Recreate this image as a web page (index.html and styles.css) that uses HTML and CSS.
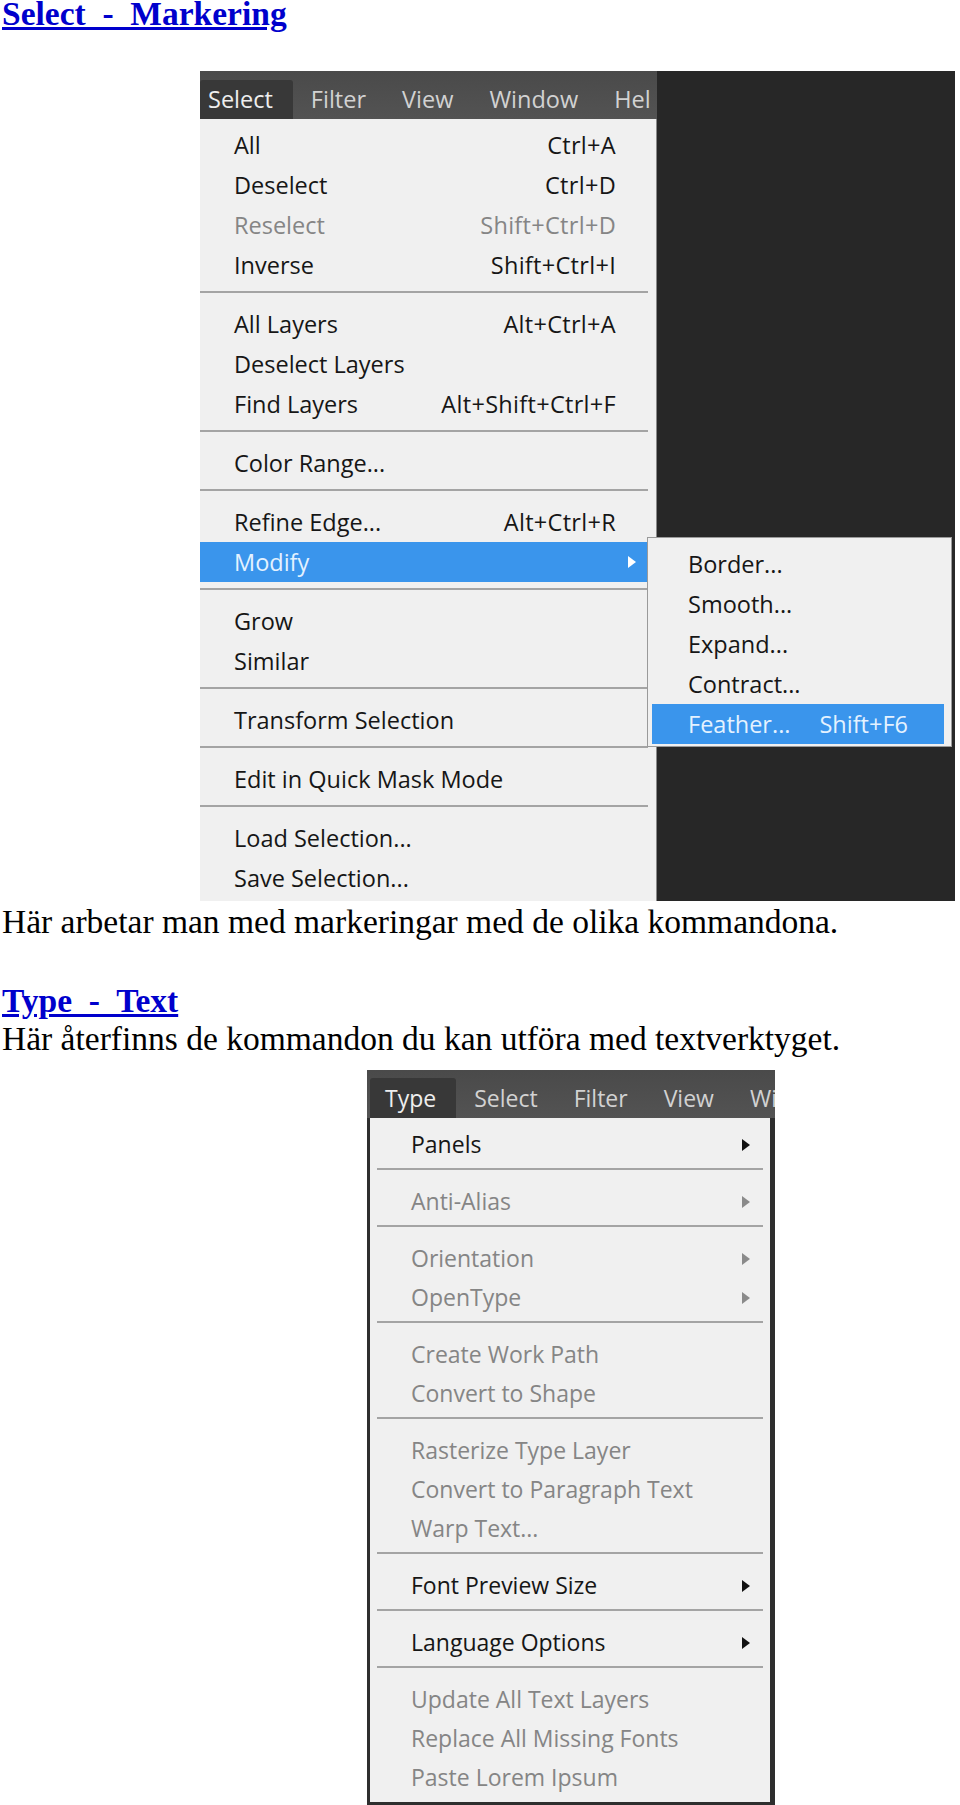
FILE: index.html
```html
<!DOCTYPE html>
<html lang="sv">
<head>
<meta charset="utf-8">
<title>Select - Markering</title>
<link rel="stylesheet" href="styles.css">
</head>
<body>
<p class="heading"><a href="#">Select&nbsp; -&nbsp; Markering</a></p>

<div class="shot shot-select">
  <div class="ps-main">
    <div class="menubar">
      <span class="mb-item mb-active">Select</span>
      <span class="mb-item">Filter</span>
      <span class="mb-item">View</span>
      <span class="mb-item">Window</span>
      <span class="mb-item mb-last">Hel</span>
    </div>
    <div class="menu menu-select">
      <div class="row"><span>All</span><span class="key">Ctrl+A</span></div>
      <div class="row"><span>Deselect</span><span class="key">Ctrl+D</span></div>
      <div class="row dis"><span>Reselect</span><span class="key">Shift+Ctrl+D</span></div>
      <div class="row"><span>Inverse</span><span class="key">Shift+Ctrl+I</span></div>
      <div class="sep"></div>
      <div class="row"><span>All Layers</span><span class="key">Alt+Ctrl+A</span></div>
      <div class="row"><span>Deselect Layers</span></div>
      <div class="row"><span>Find Layers</span><span class="key">Alt+Shift+Ctrl+F</span></div>
      <div class="sep"></div>
      <div class="row"><span>Color Range...</span></div>
      <div class="sep"></div>
      <div class="row"><span>Refine Edge...</span><span class="key">Alt+Ctrl+R</span></div>
      <div class="row hl"><span>Modify</span><span class="arr"></span></div>
      <div class="sep"></div>
      <div class="row"><span>Grow</span></div>
      <div class="row"><span>Similar</span></div>
      <div class="sep"></div>
      <div class="row"><span>Transform Selection</span></div>
      <div class="sep"></div>
      <div class="row"><span>Edit in Quick Mask Mode</span></div>
      <div class="sep"></div>
      <div class="row"><span>Load Selection...</span></div>
      <div class="row"><span>Save Selection...</span></div>
    </div>
  </div>
  <div class="ps-canvas"></div>
  <div class="submenu">
    <div class="srow"><span>Border...</span></div>
    <div class="srow"><span>Smooth...</span></div>
    <div class="srow"><span>Expand...</span></div>
    <div class="srow"><span>Contract...</span></div>
    <div class="srow hl"><span>Feather...</span><span>Shift+F6</span></div>
  </div>
</div>

<p class="para para-select">Här arbetar man med markeringar med de olika kommandona.</p>

<p class="heading heading-type"><a href="#">Type&nbsp; -&nbsp; Text</a></p>
<p class="para">Här återfinns de kommandon du kan utföra med textverktyget.</p>

<div class="shot shot-type">
  <div class="menubar menubar-type">
    <span class="mb-item mb-active">Type</span>
    <span class="mb-item">Select</span>
    <span class="mb-item">Filter</span>
    <span class="mb-item">View</span>
    <span class="mb-item mb-last">Wi</span>
  </div>
  <div class="menu menu-type">
    <div class="trow"><span>Panels</span><span class="arr"></span></div>
    <div class="tsep"></div>
    <div class="trow dis"><span>Anti-Alias</span><span class="arr"></span></div>
    <div class="tsep"></div>
    <div class="trow dis"><span>Orientation</span><span class="arr"></span></div>
    <div class="trow dis"><span>OpenType</span><span class="arr"></span></div>
    <div class="tsep"></div>
    <div class="trow dis"><span>Create Work Path</span></div>
    <div class="trow dis"><span>Convert to Shape</span></div>
    <div class="tsep"></div>
    <div class="trow dis"><span>Rasterize Type Layer</span></div>
    <div class="trow dis"><span>Convert to Paragraph Text</span></div>
    <div class="trow dis"><span>Warp Text...</span></div>
    <div class="tsep"></div>
    <div class="trow"><span>Font Preview Size</span><span class="arr"></span></div>
    <div class="tsep"></div>
    <div class="trow"><span>Language Options</span><span class="arr"></span></div>
    <div class="tsep"></div>
    <div class="trow dis"><span>Update All Text Layers</span></div>
    <div class="trow dis"><span>Replace All Missing Fonts</span></div>
    <div class="trow dis"><span>Paste Lorem Ipsum</span></div>
  </div>
</div>
</body>
</html>
```

FILE: styles.css
```css
html {
  overflow: hidden;
}

body {
  margin: 0;
  padding-left: 2px;
  background: #ffffff;
  color: #000000;
  font-family: "Liberation Serif", "Times New Roman", serif;
}

.heading {
  margin: 0;
  font-size: 33.5px;
  line-height: 28px;
  font-weight: bold;
}

.heading a {
  color: #0000cc;
  text-decoration: underline;
}

.heading-type {
  margin-top: 41px;
  line-height: 38px;
}

.para {
  margin: 0;
  font-size: 33.5px;
  line-height: 38px;
}

.para-select {
  margin-top: 2px;
}

/* ---------- Photoshop screenshots ---------- */

.shot {
  font-family: "Open Sans", "Noto Sans", "DejaVu Sans", sans-serif;
  font-size: 23.5px;
}

.shot-select {
  position: relative;
  display: flex;
  width: 755px;
  margin: 43px 0 0 198px;
}

.ps-main {
  width: 457px;
  flex: none;
}

.ps-canvas {
  flex: 1;
  background: #272727;
}

.menubar {
  display: flex;
  height: 48px;
  box-sizing: border-box;
  padding-top: 9px;
  background: linear-gradient(#4a4a4a, #535353);
  overflow: hidden;
  white-space: nowrap;
}

.mb-item {
  flex: none;
  height: 39px;
  line-height: 39px;
  padding: 0 18px;
  color: #d2d2d2;
}

.mb-last {
  padding-right: 0;
}

.mb-active {
  padding: 0 20px 0 8px;
  background: #383838;
  color: #eeeeee;
  border-radius: 3px 3px 0 0;
}

.menu {
  background: #f0f0f0;
  color: #161616;
}

.menu-select {
  padding: 6px 0 3px;
  border-right: 1px solid #8a8a8a;
}

.row {
  display: flex;
  justify-content: space-between;
  align-items: center;
  height: 40px;
  line-height: 40px;
  padding: 0 20px 0 34px;
  white-space: nowrap;
}

.row .key {
  padding-right: 20px;
  letter-spacing: 0.3px;
}

.dis {
  color: #858585;
}

.hl {
  background: #3a95ec;
  color: #e4f2ff;
}

.arr {
  width: 0;
  height: 0;
  border-left: 8px solid currentColor;
  border-top: 6px solid transparent;
  border-bottom: 6px solid transparent;
}

.row.hl .arr {
  border-left-color: #ffffff;
}

.sep {
  height: 19px;
  margin-right: 8px;
  background: linear-gradient(#a4a4a4, #a4a4a4) no-repeat 0 6px / 100% 2px;
}

.submenu {
  position: absolute;
  left: 447px;
  top: 466px;
  width: 305px;
  height: 210px;
  box-sizing: border-box;
  padding: 6px 7px 3px 4px;
  background: #f0f0f0;
  border: 1px solid #9a9a9a;
  color: #161616;
}

.srow {
  display: flex;
  justify-content: space-between;
  height: 40px;
  line-height: 40px;
  padding: 0 36px;
  white-space: nowrap;
}

/* ---------- Type menu ---------- */

.shot-type {
  width: 408px;
  margin: 12px 0 0 365px;
  padding-bottom: 3px;
  background: #2e2e2e;
  font-size: 23px;
}

.menubar-type {
  padding-top: 8px;
}

.menubar-type .mb-item {
  height: 40px;
  line-height: 40px;
}

.menubar-type .mb-active {
  margin-left: 3px;
  padding: 0 20px 0 15px;
}

.menu-type {
  margin: 0 5px 0 3px;
  padding: 7px 0 5px;
}

.trow {
  display: flex;
  justify-content: space-between;
  align-items: center;
  height: 39px;
  line-height: 39px;
  padding: 0 20px 0 41px;
  white-space: nowrap;
}

.trow .arr {
  color: #111111;
}

.trow.dis .arr {
  color: #8a8a8a;
}

.tsep {
  height: 18px;
  margin: 0 7px;
  background: linear-gradient(#a4a4a4, #a4a4a4) no-repeat 0 4px / 100% 2px;
}
```
